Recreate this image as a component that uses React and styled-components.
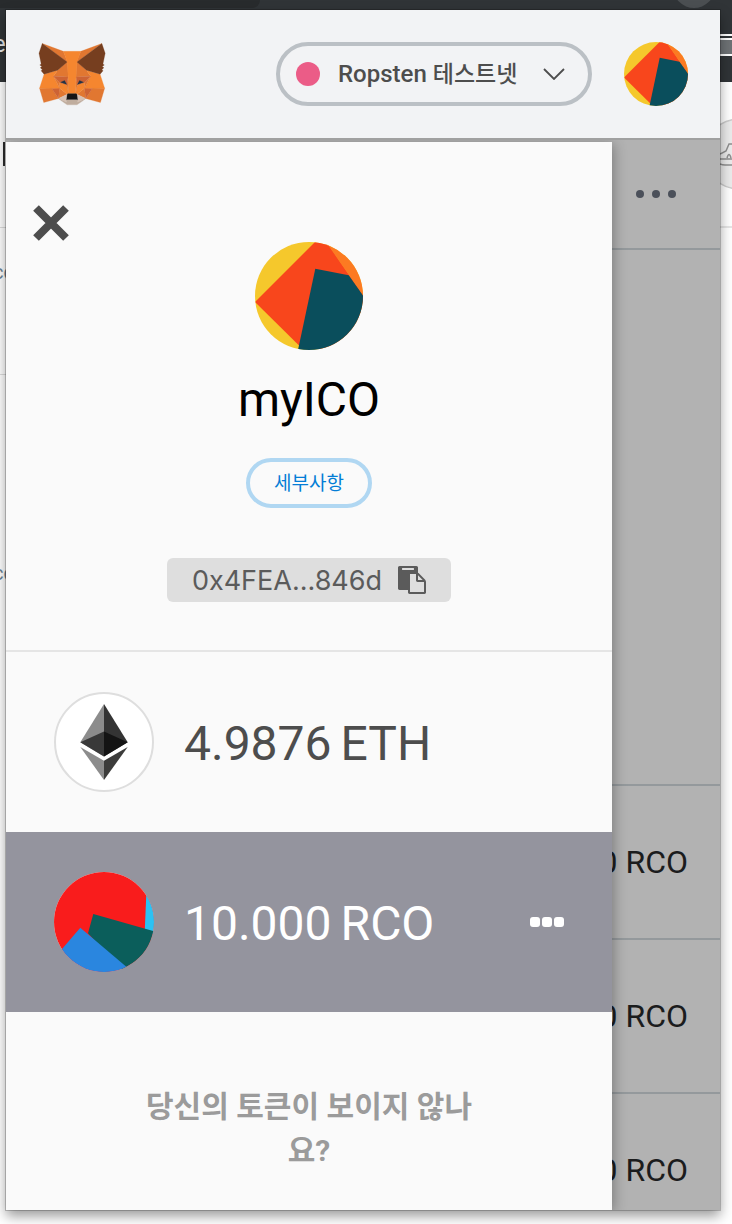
import React from "react";
import styled, { createGlobalStyle } from "styled-components";

const TRANSACTIONS = [
  { id: 1, amount: "-10.000 RCO" },
  { id: 2, amount: "-10.000 RCO" },
  { id: 3, amount: "-10.000 RCO" },
];

const FOX_SHAPES = [
  ["#e17731", "274.1,35.5 174.6,109.4 193,65.8"],
  ["#e17731", "44.4,35.5 143.1,110.1 125.6,65.8"],
  ["#e17731", "238.3,206.8 211.8,247.4 268.5,263 284.8,207.7"],
  ["#e17731", "33.9,207.7 50.1,263 106.8,247.4 80.3,206.8"],
  ["#e17731", "103.6,138.2 87.8,162.1 144.1,164.6 142.1,104.1"],
  ["#e17731", "214.9,138.2 175.9,103.4 174.6,164.6 230.8,162.1"],
  ["#e17731", "106.8,247.4 140.6,230.9 111.4,208.1"],
  ["#e17731", "177.9,230.9 211.8,247.4 207.1,208.1"],
  ["#d7c1b3", "211.8,247.4 177.9,230.9 180.6,253 180.3,262.3"],
  ["#d7c1b3", "106.8,247.4 138.3,262.3 138.1,253 140.6,230.9"],
  ["#cd6334", "106.8,247.4 111.6,206.8 80.3,207.7"],
  ["#cd6334", "207,206.8 211.8,247.4 238.3,207.7"],
  ["#f5862f", "267.2,153.5 214.9,138.2 230.8,162.1 207.1,208.1 238.3,207.7 284.8,207.7"],
  ["#f5862f", "103.6,138.2 51.3,153.5 33.9,207.7 80.3,207.7 111.4,208.1 87.8,162.1"],
  ["#f5862f", "179.8,193.5 173.1,227.6 177.9,230.9 207.1,208.1 208.1,185.2"],
  ["#f5862f", "110.6,185.2 111.4,208.1 140.6,230.9 145.4,227.6 138.8,193.5"],
  ["#e17731", "87.8,162.1 111.4,208.1 110.6,185.2"],
  ["#e17731", "208.1,185.2 207.1,208.1 230.8,162.1"],
  ["#e17731", "144.1,164.6 138.8,193.5 145.4,227.6 146.9,182.7"],
  ["#e17731", "174.6,164.6 171.9,182.6 173.1,227.6 179.8,193.5"],
  ["#cd6334", "87.8,162.1 144.1,164.6 138.8,193.5 110.6,185.2"],
  ["#cd6334", "230.8,162.1 174.6,164.6 179.8,193.5 208.1,185.2"],
  ["#233447", "138.8,193.5 114.6,185.2 130.5,178.1"],
  ["#233447", "179.7,193.5 188,178.1 204,185.2"],
  ["#c0ad9e", "180.3,262.3 180.6,253 178.1,250.8 140.4,250.8 138.1,253 138.3,262.3 106.8,247.4 117.8,256.4 140.1,271.9 178.4,271.9 200.8,256.4 211.8,247.4"],
  ["#161616", "177.9,230.9 173.1,227.6 145.4,227.6 140.6,230.9 138.1,253 140.4,250.8 178.1,250.8 180.6,253"],
  ["#763e1f", "278.3,114.2 286.8,73.4 274.1,35.5 177.9,106.9 214.9,138.2 267.2,153.5 278.8,140 273.8,136.4 281.8,129.1 275.6,124.3 283.6,118.2"],
  ["#763e1f", "31.8,73.4 40.3,114.2 34.9,118.2 42.9,124.3 36.8,129.1 44.8,136.4 39.8,140 51.3,153.5 103.6,138.2 140.6,106.9 44.4,35.5"],
  ["#f5862f", "174.6,164.6 177.9,106.9 193.1,65.8 125.6,65.8 140.6,106.9 144.1,164.6 145.3,182.8 145.4,227.6 173.1,227.6 173.3,182.8"],
];

const FoxLogo = () => (
  <svg width="68" height="64" viewBox="28 30 262 246" aria-hidden="true">
    {FOX_SHAPES.map(([fill, points]) => (
      <polygon key={fill + points} fill={fill} stroke={fill} strokeWidth="1" points={points} />
    ))}
  </svg>
);

const AccountIdenticon = () => (
  <svg viewBox="0 0 108 108" aria-hidden="true">
    <rect width="108" height="108" fill="#f5c82c" />
    <polygon fill="#f8461c" points="61,-1 0,60 44,103.500 70,108 108,108 108,53 71,-1" />
    <polygon fill="#fc7a22" points="71,0 108,53.500 108,0" />
    <polygon fill="#0a4e5c" points="60.300,26.700 93.700,33.300 108,53.500 108,108 43,108" />
  </svg>
);

const TokenIdenticon = () => (
  <svg viewBox="0 0 100 100" aria-hidden="true">
    <rect width="100" height="100" fill="#f91c1c" />
    <polygon fill="#2bc2f3" points="92.400,20 90.700,60 100,62 100,20" />
    <polygon fill="#0b5e5b" points="39.300,42 101,59.500 101,100 70,100 34,61.300" />
    <polygon fill="#2a86df" points="26.300,55.700 5,80.500 5,100 78.500,100" />
  </svg>
);

const EtherLogo = () => (
  <svg viewBox="2 2 96 96" aria-hidden="true">
    <polygon fill="#8c8c8c" points="50,12 26.300,50.300 50,64.500" />
    <polygon fill="#343434" points="50,12 73.700,50.300 50,64.500" />
    <polygon fill="#393939" points="50,39.500 26.300,50.300 50,64.500" />
    <polygon fill="#141414" points="50,39.500 73.700,50.300 50,64.500" />
    <polygon fill="#8c8c8c" points="26.300,55 50,68.800 50,88" />
    <polygon fill="#3c3c3b" points="73.700,55 50,68.800 50,88" />
  </svg>
);

const PasteIcon = () => (
  <svg width="28" height="28" viewBox="0 0 1792 1792" fill="#5b5b5b" aria-hidden="true">
    <path d="M768 1664h896v-640h-416q-40 0-68-28t-28-68v-416h-384v1152zm256-1440v-64q0-13-9.500-22.500t-22.500-9.500h-704q-13 0-22.500 9.500t-9.500 22.500v64q0 13 9.500 22.500t22.500 9.500h704q13 0 22.500-9.500t9.500-22.500zm256 672h299l-299-299v299zm512 128v672q0 40-28 68t-68 28h-960q-40 0-68-28t-28-68v-160h-544q-40 0-68-28t-28-68v-1344q0-40 28-68t68-28h1088q40 0 68 28t28 68v328q21 13 36 28l408 408q28 28 48 76t20 88z" />
  </svg>
);

const App = () => {
  return (
    <Stage>
      <GlobalStyle />

      {/* Browser window that the popup is opened over */}
      <Backdrop aria-hidden="true">
        <BrowserBar>
          <BrowserTab />
          <BrowserBarEdge>
            <PeekText color="#e8e8e8" size={24}>e</PeekText>
            <AddressField />
          </BrowserBarEdge>
          <BrowserCircle />
        </BrowserBar>
        <PageBehind>
          <PageLeft>
            <PeekBlock height={146} top={60}>
              <PeekBar />
            </PeekBlock>
            <PeekBlock height={147} top={32}>
              <PeekText color="#6f8496" size={20}>cc</PeekText>
            </PeekBlock>
            <PeekBlock height={400} top={186}>
              <PeekText color="#6f8496" size={20}>cc</PeekText>
            </PeekBlock>
          </PageLeft>
          <PageRight>
            <svg width="12" height="72" viewBox="0 0 12 72">
              <circle cx="19" cy="36" r="35" fill="#ebebeb" stroke="#cccccc" strokeWidth="1.500" />
              <path d="M0 36l6-3 3-7h4M0 41h12M0 46q2 1 5 1h8M7 40q2-7 4 0" fill="none" stroke="#8f8f8f" strokeWidth="1.500" />
            </svg>
          </PageRight>
        </PageBehind>
      </Backdrop>

      <Popup>
        <Header>
          <FoxLogo />
          <HeaderActions>
            <NetworkButton type="button">
              <NetworkDot />
              <NetworkName>
                Ropsten <Korean>테스트넷</Korean>
              </NetworkName>
              <svg width="22" height="12" viewBox="0 0 22 12" aria-hidden="true">
                <path d="M1 1l10 10L21 1" fill="none" stroke="#4d4d4d" strokeWidth="1.800" />
              </svg>
            </NetworkButton>
            <AvatarButton type="button" aria-label="내 계정">
              <AccountIdenticon />
            </AvatarButton>
          </HeaderActions>
        </Header>

        <Body>
          <Main>
            <MenuBar>
              <MenuButton type="button" aria-label="메뉴">
                <MenuDot />
                <MenuDot />
                <MenuDot />
              </MenuButton>
            </MenuBar>
            <Overview />
            {TRANSACTIONS.map((tx) => (
              <Transaction key={tx.id}>{tx.amount}</Transaction>
            ))}
          </Main>

          <Sidebar>
            <Account>
              <CloseButton type="button" aria-label="닫기">
                <svg width="36" height="36" viewBox="0 0 36 36" aria-hidden="true">
                  <path d="M3 3l30 30M33 3L3 33" stroke="#4d4d4d" strokeWidth="8" />
                </svg>
              </CloseButton>
              <AccountAvatar>
                <AccountIdenticon />
              </AccountAvatar>
              <AccountName>myICO</AccountName>
              <DetailsButton type="button">세부사항</DetailsButton>
              <AddressButton type="button">
                0x4FEA...846d
                <PasteIcon />
              </AddressButton>
            </Account>

            <TokenRow>
              <TokenIcon $outlined>
                <EtherLogo />
              </TokenIcon>
              <TokenBalance>
                <span>4.9876</span>
                <span>ETH</span>
              </TokenBalance>
            </TokenRow>
            <TokenRow $active>
              <TokenIcon>
                <TokenIdenticon />
              </TokenIcon>
              <TokenBalance>
                <span>10.000</span>
                <span>RCO</span>
              </TokenBalance>
              <TokenMenu type="button" aria-label="토큰 메뉴">
                <TokenMenuDot />
                <TokenMenuDot />
                <TokenMenuDot />
              </TokenMenu>
            </TokenRow>

            <MissingTokens>당신의 토큰이 보이지 않나요?</MissingTokens>
          </Sidebar>
        </Body>
      </Popup>
    </Stage>
  );
};

const GlobalStyle = createGlobalStyle`
  * {
    box-sizing: border-box;
  }

  body {
    margin: 0;
    background: #ffffff;
    font-family: Roboto, "Noto Sans CJK KR", sans-serif;
  }

  button {
    margin: 0;
    padding: 0;
    border: none;
    background: none;
    font-family: inherit;
    cursor: pointer;
  }

  svg {
    display: block;
    flex-shrink: 0;
  }
`;

const Stage = styled.div`
  position: relative;
  height: 100vh;
  padding: 10px 12px 14px 6px;
  overflow: hidden;
`;

const Backdrop = styled.div`
  position: absolute;
  inset: 0;
  overflow: hidden;
`;

const BrowserBar = styled.div`
  position: relative;
  height: 82px;
  background: #303437;
`;

const BrowserTab = styled.div`
  width: 260px;
  height: 8px;
  background: #282b2d;
  border-bottom-right-radius: 16px;
`;

const BrowserBarEdge = styled.div`
  display: flex;
  justify-content: space-between;
  padding-top: 24px;
`;

const BrowserCircle = styled.div`
  position: absolute;
  top: -34px;
  right: 17px;
  width: 42px;
  height: 42px;
  border-radius: 50%;
  background: #4b4f52;
`;

const AddressField = styled.div`
  width: 12px;
  height: 18px;
  margin-top: 6px;
  background: #6e7275;
  border: solid #ffffff;
  border-width: 2px 0;
  box-shadow: 0 -2px 0 #303437, 0 -4px 0 #ffffff;
`;

const PageBehind = styled.div`
  display: flex;
  justify-content: space-between;
`;

const PageLeft = styled.div`
  width: 6px;
  overflow: hidden;
`;

const PageRight = styled.div`
  width: 12px;
  height: 146px;
  padding-top: 36px;
  border-bottom: 2px solid #e6e6e6;
`;

const PeekBlock = styled.div.withConfig({
  shouldForwardProp: (prop) => !["height", "top"].includes(prop),
})`
  height: ${(props) => props.height}px;
  padding-top: ${(props) => props.top}px;
  border-bottom: 1px solid #dddddd;

  &:last-child {
    border-bottom: none;
  }
`;

const PeekBar = styled.div`
  width: 2px;
  height: 24px;
  margin-left: 3px;
  background: #2b2b2b;
`;

const PeekText = styled.span.withConfig({
  shouldForwardProp: (prop) => !["color", "size"].includes(prop),
})`
  display: block;
  width: 6px;
  margin-left: -7px;
  font-size: ${(props) => props.size}px;
  line-height: 24px;
  color: ${(props) => props.color};
`;

const Popup = styled.div`
  position: relative;
  display: flex;
  flex-direction: column;
  height: 100%;
  background: #b2b2b2;
  box-shadow: 0 0 0 1px rgba(0, 0, 0, 0.2), 0 6px 12px rgba(0, 0, 0, 0.4);
`;

const Header = styled.header`
  display: flex;
  flex-shrink: 0;
  align-items: center;
  justify-content: space-between;
  height: 130px;
  padding: 0 32px;
  background: #f2f3f5;
  border-bottom: 2px solid #a0a0a0;
`;

const HeaderActions = styled.div`
  display: flex;
  align-items: center;
  gap: 32px;
`;

const NetworkButton = styled.button`
  display: flex;
  align-items: center;
  width: 316px;
  height: 64px;
  padding: 0 23px 0 16px;
  border: 4px solid #bbc0c5;
  border-radius: 32px;
`;

const NetworkDot = styled.span`
  width: 24px;
  height: 24px;
  border-radius: 50%;
  background: #eb5c87;
`;

const NetworkName = styled.span`
  flex: 1;
  padding-left: 18px;
  font-size: 24px;
  font-weight: 500;
  line-height: 32px;
  color: #4d4d4d;
  text-align: left;
  white-space: nowrap;
`;

const Korean = styled.span`
  font-size: 23px;
`;

const AvatarButton = styled.button`
  width: 64px;
  height: 64px;
  border-radius: 50%;
  overflow: hidden;
`;

const Body = styled.div`
  position: relative;
  flex: 1;
  min-height: 0;
  overflow: hidden;
`;

const Main = styled.main`
  display: flex;
  flex-direction: column;
`;

const MenuBar = styled.div`
  display: flex;
  align-items: center;
  justify-content: flex-end;
  height: 110px;
  padding-right: 44px;
  border-bottom: 2px solid #94999c;
`;

const MenuButton = styled.button`
  display: flex;
  gap: 8px;
`;

const MenuDot = styled.span`
  width: 8px;
  height: 8px;
  border-radius: 50%;
  background: #4b505a;
`;

const Overview = styled.section`
  height: 534px;
`;

const Transaction = styled.div`
  display: flex;
  align-items: center;
  justify-content: flex-end;
  height: 154px;
  padding-right: 32px;
  border-top: 2px solid #94999c;
  font-size: 32px;
  color: #1b1c1d;
`;

// Drawer that slides in over the main view
const Sidebar = styled.aside`
  position: absolute;
  top: 2px;
  right: 108px;
  bottom: 0;
  left: 0;
  overflow: hidden;
  background: #fafafa;
  box-shadow: 2px 2px 12px rgba(0, 0, 0, 0.3);
`;

const Account = styled.section`
  position: relative;
  display: flex;
  flex-direction: column;
  align-items: center;
  padding: 100px 0 48px;
  border-bottom: 2px solid #e5e5e5;
`;

const CloseButton = styled.button`
  position: absolute;
  top: 63px;
  left: 27px;
`;

const AccountAvatar = styled.div`
  width: 108px;
  height: 108px;
  border-radius: 50%;
  overflow: hidden;
`;

const AccountName = styled.h1`
  margin: 20px 0 28px;
  font-size: 48px;
  font-weight: 400;
  line-height: 60px;
  color: #000000;
`;

const DetailsButton = styled.button`
  width: 126px;
  height: 50px;
  padding-bottom: 4px;
  border: 4px solid #b0d7f2;
  border-radius: 25px;
  font-size: 19px;
  color: #037dd6;
`;

const AddressButton = styled.button`
  display: flex;
  align-items: center;
  justify-content: center;
  gap: 16px;
  width: 284px;
  height: 44px;
  margin-top: 50px;
  border-radius: 6px;
  background: #dedede;
  font-family: Inter, sans-serif;
  font-size: 27px;
  color: #5b5b5b;
`;

const TokenRow = styled.div`
  display: flex;
  align-items: center;
  height: 180px;
  padding: 0 48px;
  background: ${(props) => (props.$active ? "#94949e" : "transparent")};
  color: ${(props) => (props.$active ? "#ffffff" : "#4d4d4d")};
`;

const TokenIcon = styled.div`
  flex-shrink: 0;
  width: 100px;
  height: 100px;
  border: ${(props) => (props.$outlined ? "2px solid #dedede" : "none")};
  border-radius: 50%;
  background: #ffffff;
  overflow: hidden;
`;

const TokenBalance = styled.div`
  display: flex;
  flex: 1;
  gap: 9px;
  padding: 3px 0 0 30px;
  font-size: 48px;
  line-height: 60px;
`;

const TokenMenu = styled.button`
  display: flex;
  gap: 2px;
`;

const TokenMenuDot = styled.span`
  width: 10px;
  height: 10px;
  border-radius: 3px;
  background: #ffffff;
`;

const MissingTokens = styled.p`
  margin: 0;
  padding: 73px 132px 0;
  font-size: 30px;
  font-weight: 700;
  line-height: 44px;
  color: #9b9b9b;
  text-align: center;
`;

export default App;
